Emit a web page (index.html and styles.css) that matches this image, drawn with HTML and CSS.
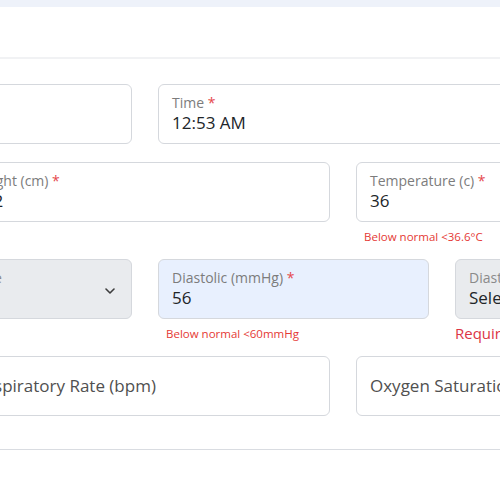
FILE: index.html
```html
<!DOCTYPE html>
<html lang="en">
<head>
<meta charset="utf-8">
<title>Vitals</title>
<link rel="stylesheet" href="styles.css">
</head>
<body>
<div class="topbar"></div>
<div class="header"></div>
<div class="form">
  <div class="row cols-2">
    <div class="group">
      <div class="field"><span class="label">Date <b>*</b></span><span class="value">05/14/2024</span></div>
    </div>
    <div class="group">
      <div class="field"><span class="label">Time <b>*</b></span><span class="value">12:53 AM</span></div>
    </div>
  </div>
  <div class="row cols-3">
    <div class="group">
      <div class="field"><span class="label">Weight (kg) <b>*</b></span><span class="value">70</span></div>
    </div>
    <div class="group">
      <div class="field"><span class="label">Height (cm) <b>*</b></span><span class="value">172</span></div>
    </div>
    <div class="group">
      <div class="field"><span class="label">Temperature (c) <b>*</b></span><span class="value">36</span></div>
      <div class="feedback">Below normal &lt;36.6°C</div>
    </div>
  </div>
  <div class="row cols-4">
    <div class="group">
      <div class="field"><span class="label">Systolic (mmHg) <b>*</b></span><span class="value">110</span></div>
    </div>
    <div class="group">
      <div class="field select">
        <div class="content"><span class="label">Blood Pressure Site</span><span class="value">Select...</span></div>
        <svg class="chevron" width="10" height="6" viewBox="0 0 10 6"><polyline points="1,1 5,5 9,1" fill="none" stroke="#3d3d3d" stroke-width="1.6" stroke-linecap="round" stroke-linejoin="round"/></svg>
      </div>
    </div>
    <div class="group">
      <div class="field autofill"><span class="label">Diastolic (mmHg) <b>*</b></span><span class="value">56</span></div>
      <div class="feedback">Below normal &lt;60mmHg</div>
    </div>
    <div class="group">
      <div class="field select">
        <div class="content"><span class="label">Diastolic Position</span><span class="value">Select...</span></div>
        <svg class="chevron" width="10" height="6" viewBox="0 0 10 6"><polyline points="1,1 5,5 9,1" fill="none" stroke="#3d3d3d" stroke-width="1.6" stroke-linecap="round" stroke-linejoin="round"/></svg>
      </div>
      <div class="required">Required</div>
    </div>
  </div>
  <div class="row cols-3">
    <div class="group">
      <div class="field empty"><span class="placeholder">Pulse (bpm)</span></div>
    </div>
    <div class="group">
      <div class="field empty"><span class="placeholder">Respiratory Rate (bpm)</span></div>
    </div>
    <div class="group">
      <div class="field empty"><span class="placeholder">Oxygen Saturation (%)</span></div>
    </div>
  </div>
</div>
<div class="footer-line"></div>
</body>
</html>
```
FILE: styles.css
```css
* { box-sizing: border-box; }
html, body { margin: 0; padding: 0; overflow: hidden; background: #ffffff; }
body {
  width: 500px;
  height: 500px;
  font-family: "Open Sans", "Noto Sans", sans-serif;
  color: #212529;
}
.topbar { height: 7px; background: #eef2fa; }
.header { height: 52px; border-bottom: 2px solid #f1f2f4; }
.form {
  width: 1162px;
  margin-left: -436px;
  padding-top: 25px;
  display: flex;
  flex-direction: column;
  gap: 18px;
}
.row { display: grid; column-gap: 26px; align-items: start; }
.cols-2 { grid-template-columns: repeat(2, 1fr); }
.cols-3 { grid-template-columns: repeat(3, 1fr); }
.cols-4 { grid-template-columns: repeat(4, 1fr); }
.field {
  height: 60px;
  border: 1px solid #d5d8dd;
  border-radius: 6px;
  background: #ffffff;
  padding: 9px 14px 0 13px;
  display: flex;
  flex-direction: column;
}
.label { font-size: 14px; line-height: 17px; color: #7c7c7c; white-space: nowrap; }
.label b { color: #e5484d; font-weight: normal; }
.value { font-size: 17px; line-height: 20px; padding-top: 2px; color: #212529; white-space: nowrap; }
.field.autofill { background: #e8f0fe; }
.field.select {
  background: #e9ebee;
  flex-direction: row;
  align-items: center;
  padding-right: 0;
}
.select .content { flex: 1; display: flex; flex-direction: column; align-self: flex-start; }
.select .label { color: #8a8a8a; }
.chevron { margin-right: 16px; margin-bottom: 6px; flex: none; }
.field.empty { padding-top: 0; justify-content: center; }
.placeholder { font-size: 17px; line-height: 24px; color: #505050; white-space: nowrap; }
.feedback {
  height: 19px;
  padding: 8px 0 0 8px;
  font-size: 11.5px;
  line-height: 14px;
  color: #e53935;
  white-space: nowrap;
}
.required {
  height: 19px;
  padding-top: 5px;
  font-size: 15px;
  line-height: 19px;
  color: #dc3545;
  white-space: nowrap;
}
.footer-line { margin-top: 33px; border-top: 1px solid #d9dce1; }
```
